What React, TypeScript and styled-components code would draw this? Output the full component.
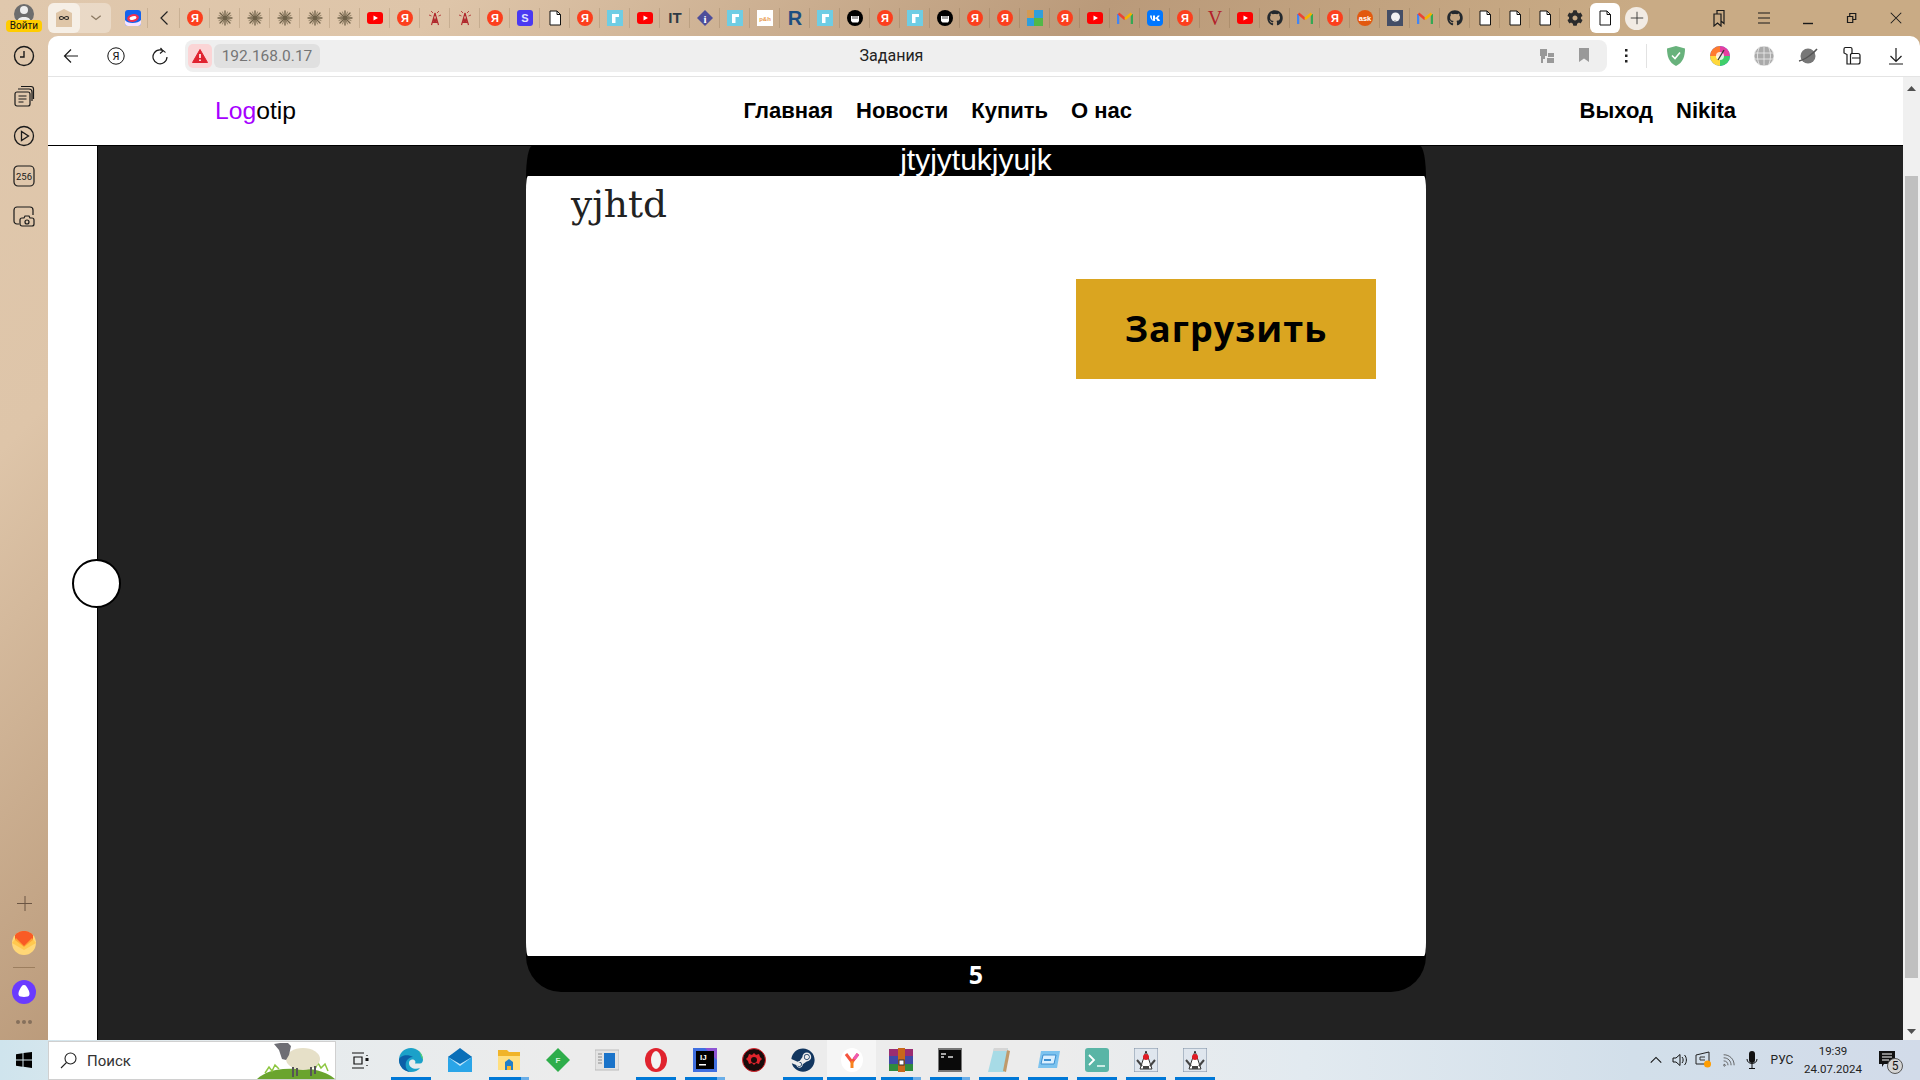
import React from "react";
import styled, { createGlobalStyle } from "styled-components";
import { FaGithub, FaCog, FaSteam } from "react-icons/fa";

const Global = createGlobalStyle`
  html, body { margin: 0; padding: 0; width: 1920px; height: 1080px; overflow: hidden; }
  body { font-family: "Liberation Sans", Arial, sans-serif; }
  * { box-sizing: border-box; }
`;

const Frame = styled.div`
  width: 1920px; height: 1080px; display: flex; flex-direction: column; overflow: hidden;
  background: linear-gradient(135deg, #e0c8ad 0%, #dec5a9 15%, #ba9a7a 37%, #c9ab85 55%, #c9ab85 100%);
`;
const TabStrip = styled.div`height: 36px; display: flex; align-items: center; flex: none;`;
const Profile = styled.div`
  width: 48px; height: 36px; flex: none; display: flex; flex-direction: column; align-items: center; position: relative;
`;
const AvatarDisc = styled.div`
  width: 20px; height: 20px; margin-top: 4px; border-radius: 50%; background: #6d6d6d; overflow: hidden;
  display: flex; justify-content: center;
`;
const LoginBadge = styled.span`
  position: absolute; top: 20px; left: 6px; width: 36px; height: 12px; border-radius: 4px; background: #fc0;
  font: 10px/12px "Roboto", sans-serif; text-align: center; color: #111;
`;
const TabGroup = styled.div`
  width: 63px; height: 30px; display: flex; border-radius: 6px; background: rgba(255,255,255,.32); margin-right: 7px; flex: none;
`;
const GroupHome = styled.div`
  width: 32px; height: 30px; border-radius: 6px; background: #f6efe6; display: flex; align-items: center; justify-content: center;
`;
const GroupArrow = styled.div`flex: 1; display: flex; align-items: center; justify-content: center;`;
const FavSlot = styled.div<{ $first?: boolean }>`
  width: 30px; height: 20px; flex: none; display: flex; align-items: center; justify-content: center;
  border-right: 1px solid rgba(90,60,30,.16);
  margin-right: ${p => (p.$first ? "2px" : "0")};
  padding-left: 1px;
  svg { width: 16px; height: 16px; display: block; }
`;
const ActiveTab = styled.div`
  width: 30px; height: 30px; flex: none; border-radius: 6px; background: #fff; display: flex; align-items: center; justify-content: center;
`;
const NewTab = styled.div`
  width: 23px; height: 23px; border-radius: 50%; background: #f2ebe3; margin-left: 5px; flex: none;
  display: flex; align-items: center; justify-content: center;
`;
const WindowControls = styled.div`display: flex; margin-left: auto; padding-right: 2px;`;
const IconSlot = styled.div`
  width: 44px; height: 32px; flex: none; display: flex; align-items: center; justify-content: center;
`;
const Middle = styled.div`flex: 1; display: flex; min-height: 0;`;
const Sidebar = styled.div`
  width: 48px; flex: none; display: flex; flex-direction: column; justify-content: space-between; padding-bottom: 8px;
`;
const SideGroup = styled.div`display: flex; flex-direction: column; align-items: center;`;
const SideSlot = styled.div`height: 40px; width: 48px; display: flex; align-items: center; justify-content: center;`;
const SideRule = styled.div`width: 22px; height: 1px; background: rgba(90,60,30,.35); margin: 4px 0;`;
const DotsSlot = styled.div`height: 20px; display: flex; gap: 2px; align-items: center;`;
const Dot = styled.span`width: 4px; height: 4px; border-radius: 50%; background: #85705c;`;
const Browser = styled.div`flex: 1; display: flex; flex-direction: column; min-width: 0;`;
const Toolbar = styled.div`
  height: 41px; flex: none; background: #fff; border-radius: 10px 10px 0 0; border-bottom: 1px solid #e4e4e4;
  display: flex; align-items: center; padding: 0 2px 1px;
`;
const AddressBar = styled.div`
  flex: 1; height: 32px; margin-left: 3px; border-radius: 8px; background: #efefef;
  display: flex; align-items: center; padding: 0 5px 0 3px; min-width: 0;
`;
const WarnPill = styled.div`
  width: 24px; height: 24px; border-radius: 5px; background: #fbd5d6; display: flex; align-items: center; justify-content: center; flex: none;
`;
const HostPill = styled.div`
  width: 106px; height: 24px; margin-left: 2px; border-radius: 6px; background: #e0e0e0; color: #757575; flex: none;
  font: 15.500px/24px "Roboto", sans-serif; text-align: center;
`;
const PageTitle = styled.div`
  flex: 1; text-align: center; font: 16px/33px "Roboto", sans-serif; color: #222; padding-right: 65px;
`;
const AddrIcon = styled.div`width: 37px; display: flex; justify-content: center; flex: none;`;
const KebabSlot = styled.div`
  width: 40px; height: 24px; flex: none; display: flex; align-items: center; justify-content: center;
  border-right: 1px solid #e2e2e2;
`;
const ExtGap = styled.div`width: 7px; flex: none;`;
const PageRow = styled.div`flex: 1; display: flex; min-height: 0;`;
const PageMain = styled.div`flex: 1; display: flex; flex-direction: column; min-width: 0;`;
const Nav = styled.nav`
  height: 69px; flex: none; background: #fff; border-bottom: 1px solid #000; padding: 0 167px;
  display: flex; align-items: center; justify-content: space-between;
`;
const Logo = styled.div`font-size: 24.700px; color: #000; line-height: 1;`;
const LogoAccent = styled.span`color: #a600ff;`;
const NavGroup = styled.div`display: flex; gap: 23px;`;
const NavLink = styled.a`font-size: 22px; font-weight: 700; color: #000; line-height: 1;`;
const Workspace = styled.div`flex: 1; display: flex; min-height: 0;`;
const Strip = styled.div`width: 50px; flex: none; background: #fff; border-right: 1px solid #000; position: relative;`;
const Knob = styled.div`
  position: absolute; left: 24px; top: 413px; width: 49px; height: 49px; border-radius: 50%; background: #fff; border: 2px solid #000;
`;
const Dark = styled.div`flex: 1; background: #222; padding: 0 0 48px 428px; display: flex;`;
const Card = styled.section`width: 900px; display: flex; flex-direction: column; background: #000; border-radius: 6px 6px 35px 35px / 32px 32px 36px 36px;`;
const CardHead = styled.header`
  height: 30px; flex: none; color: #fff; font-size: 30px; line-height: 28px; text-align: center;
`;
const CardBody = styled.div`
  flex: 1; background: #fff; border-radius: 2px / 14px; padding: 0 50px 0 45px; display: flex; flex-direction: column;
`;
const CardTitle = styled.div`font: 37.500px/44px "DejaVu Serif", serif; color: #222; margin-top: 6px;`;
const Upload = styled.button`
  align-self: flex-end; width: 300px; height: 100px; margin-top: 53px; background: #daa520; border: 0; color: #000;
  font: 700 36px/100px "Open Sans", sans-serif; letter-spacing: 1px; padding: 0;
`;
const CardFoot = styled.footer`
  height: 36px; flex: none; color: #fff; text-align: center; font: 700 25px/36px "Open Sans", sans-serif;
`;
const Scrollbar = styled.div`
  width: 17px; flex: none; background: #f0f0f0; display: flex; flex-direction: column; align-items: center;
  padding: 4px 0 2px;
`;
const ScrollArrow = styled.div`height: 14px; display: flex; align-items: center; justify-content: center;`;
const ScrollThumb = styled.div`width: 13px; height: 802px; margin: 81px 0 auto; background: #c0c0c0;`;
const Taskbar = styled.div`
  height: 40px; flex: none; display: flex; align-items: stretch;
  background: linear-gradient(90deg, #cfe4ed 0, #e4ebee 10%, #ececec 30%, #ececec 55%, #e2eaf0 68%, #d2dfea 85%, #d2dbe9 100%);
`;
const StartBtn = styled.div`width: 48px; flex: none; display: flex; align-items: center; justify-content: center;`;
const SearchBox = styled.div`
  width: 288px; flex: none; margin-top: 1px; background: #fff; border: 1px solid #d0d0d0;
  display: flex; align-items: center; padding-left: 11px; position: relative; overflow: hidden;
`;
const SearchText = styled.span`font: 15px "Roboto", sans-serif; color: #333; margin-left: 10px;`;
const Sheep = styled.div`position: absolute; right: 0; bottom: 0; line-height: 0;`;
const TaskView = styled.div`width: 48px; flex: none; display: flex; align-items: center; justify-content: center;`;
const Apps = styled.div`display: flex; margin-left: 2px;`;
type AppState = "off" | "on" | "stack" | "active";
const App49 = styled.div<{ $state: AppState }>`
  width: 49px; flex: none; display: flex; align-items: center; justify-content: center;
  svg { width: 24px; height: 24px; display: block; }
  background-repeat: no-repeat;
  ${p => p.$state === "on" && "background-image: linear-gradient(#0078d7,#0078d7); background-size: 40px 3px; background-position: center bottom;"}
  ${p => p.$state === "stack" && "background-image: linear-gradient(90deg,#0078d7 0,#0078d7 32px,#6aaee8 32px,#6aaee8 40px); background-size: 40px 3px; background-position: center bottom;"}
  ${p => p.$state === "active" && "background-color: #f5f5f5; background-image: linear-gradient(#0078d7,#0078d7); background-size: 100% 3px; background-position: center bottom;"}
`;
const Tray = styled.div`margin-left: auto; display: flex; align-items: center; padding-right: 12px;`;
const TraySlot = styled.div`width: 24px; display: flex; align-items: center; justify-content: center;`;
const Lang = styled.div`width: 36px; text-align: center; font: 12px "Roboto", sans-serif; color: #222;`;
const Clock = styled.div`width: 66px; text-align: center; font: 11.500px/18px "Roboto", sans-serif; color: #222;`;
const Notify = styled.div`width: 42px; height: 40px; display: flex; align-items: center; justify-content: center; position: relative;`;
const NotifyBadge = styled.span`
  position: absolute; left: 21px; top: 18px; width: 16px; height: 16px; border-radius: 50%; background: #d4d4d4; border: 1px solid #555;
  font: 12px/14px "Roboto", sans-serif; text-align: center; color: #111;
`;

const Ya = () => (
  <svg viewBox="0 0 16 16"><circle cx="8" cy="8" r="8" fill="#fc3f1d" /><text x="8" y="12" textAnchor="middle" fontSize="11" fontWeight="700" fontFamily="Liberation Sans" fill="#fff">Я</text></svg>
);
const Star = () => (
  <svg viewBox="0 0 16 16" stroke="#6f6149" strokeWidth="1.300" strokeLinecap="round">
    <path d="M8 1v14M1 8h14M3 3l10 10M13 3L3 13" /><path d="M5.500 2l5 12M10.500 2l-5 12M2 5.500l12 5M14 5.500l-12 5" strokeWidth=".7" />
  </svg>
);
const Yt = () => (
  <svg viewBox="0 0 16 16"><rect y="2" width="16" height="12" rx="3" fill="#f00" /><path d="M6.500 5.500v5L11 8z" fill="#fff" /></svg>
);
const Tower = () => (
  <svg viewBox="0 0 16 16" fill="none" stroke="#b0282c" strokeWidth="1.100">
    <path d="M8 3L4.500 15M8 3l3.500 12M6.500 9h3M5.500 12.500h5M6 9l4 3.500M10 9l-4 3.500" /><path d="M4 1l2 2M12 1l-2 2M2 5l2.500 1M14 5l-2.500 1" strokeWidth=".8" />
  </svg>
);
const SquareS = () => (
  <svg viewBox="0 0 16 16"><rect width="16" height="16" rx="3" fill="#4a38f2" /><text x="8" y="12" textAnchor="middle" fontSize="11" fontWeight="700" fontFamily="Liberation Sans" fill="#dfe0ff">S</text></svg>
);
const Doc = () => (
  <svg viewBox="0 0 16 16" style={{ width: 16, height: 16 }} fill="#fff" stroke="#111" strokeWidth="1"><path d="M3 1h7l3.500 3.500V15H3z" /><path d="M10 1v3.500h3.500" fill="none" /></svg>
);
const RTile = () => (
  <svg viewBox="0 0 16 16"><rect width="16" height="16" fill="#6ecde4" /><path d="M5 4h7v3H8.500v6H5z" fill="#fff" /></svg>
);
const IT = () => (
  <svg viewBox="0 0 16 16" overflow="visible"><text x="8" y="13" textAnchor="middle" fontSize="15" fontWeight="700" fontFamily="Liberation Sans" fill="#2f3a45">IT</text></svg>
);
const Info = () => (
  <svg viewBox="0 0 16 16"><path d="M8 0l8 8-8 8-8-8z" fill="#4d4d9a" /><text x="8" y="12.500" textAnchor="middle" fontSize="11" fontWeight="700" fontFamily="Liberation Serif" fill="#fff">i</text></svg>
);
const PH = () => (
  <svg viewBox="0 0 16 16"><rect width="16" height="16" fill="#fff" /><text x="8" y="10.500" textAnchor="middle" fontSize="6" fontWeight="700" fontFamily="Liberation Sans" fill="#e89a4c">p&amp;h</text></svg>
);
const BigR = () => (
  <svg viewBox="0 0 16 16" overflow="visible"><text x="8" y="14.500" textAnchor="middle" fontSize="20" fontWeight="700" fontFamily="Liberation Sans" fill="#1d4e80">R</text></svg>
);
const Fist = () => (
  <svg viewBox="0 0 16 16"><circle cx="8" cy="8" r="8" fill="#000" /><path d="M4 6h8v5l-1 1.500H5.500L4 11z" fill="#fff" /><path d="M6 6v3M8 6v3M10 6v3" stroke="#000" strokeWidth=".7" /></svg>
);
const Tiles = () => (
  <svg viewBox="0 0 16 16"><rect width="7" height="8" fill="#d39a54" /><rect x="7" width="9" height="8" fill="#2f9fdc" /><rect y="8" width="7" height="8" fill="#2f9fdc" /><rect x="7" y="8" width="9" height="8" fill="#52b848" /></svg>
);
const Gmail = () => (
  <svg viewBox="0 0 16 16" fill="none"><path d="M1 14V4" stroke="#4285f4" strokeWidth="2.500" /><path d="M15 14V4" stroke="#34a853" strokeWidth="2.500" /><path d="M1.500 3.500L8 9" stroke="#ea4335" strokeWidth="2.500" /><path d="M14.500 3.500L8 9" stroke="#f4b400" strokeWidth="2.500" /></svg>
);
const Vk = () => (
  <svg viewBox="0 0 16 16"><rect width="16" height="16" rx="4" fill="#0077ff" /><path d="M3 5.500c.2 3.500 2 5.500 5 5.500V8.500c1 .1 2 1.100 2.500 2.500H13c-.5-1.700-1.500-2.600-2.300-3 .8-.4 1.700-1.400 2-2.500h-2c-.3 1-1.500 2.300-2.700 2.400V5.500H6v4.400C5 9.600 4.800 7.500 4.800 5.500z" fill="#fff" /></svg>
);
const BigV = () => (
  <svg viewBox="0 0 16 16" overflow="visible"><text x="8" y="14.500" textAnchor="middle" fontSize="20" fontFamily="Liberation Serif" fill="#b3202a">V</text></svg>
);
const Ask = () => (
  <svg viewBox="0 0 16 16"><circle cx="8" cy="8" r="8" fill="#e2590f" /><text x="8" y="10.800" textAnchor="middle" fontSize="7.500" fontWeight="700" fontFamily="Liberation Sans" fill="#fff">ask</text></svg>
);
const DarkSq = () => (
  <svg viewBox="0 0 16 16"><rect width="16" height="16" fill="#444e66" /><circle cx="8.500" cy="7" r="4.500" fill="#f2f2f2" /><circle cx="8" cy="11" r="1" fill="#aaa" /></svg>
);
const OperaBox = () => (
  <svg viewBox="0 0 16 16"><rect width="16" height="16" rx="3" fill="#1463ee" /><path d="M0 10c2 4 13 4 16 0v3a3 3 0 01-3 3H3a3 3 0 01-3-3z" fill="#f5e3ff" /><ellipse cx="8" cy="8" rx="6" ry="3.800" fill="#f0304f" transform="rotate(-12 8 8)" /><ellipse cx="8" cy="8" rx="3.500" ry="1.800" fill="#fff" transform="rotate(-12 8 8)" /></svg>
);
const Chev = () => (
  <svg viewBox="0 0 16 16" fill="none" stroke="#222" strokeWidth="1.200"><path d="M10.500 1.500L4 8l6.500 6.500" /></svg>
);

const favs: React.ReactNode[] = [
  <OperaBox />, <Chev />, <Ya />, <Star />, <Star />, <Star />, <Star />, <Star />, <Yt />, <Ya />, <Tower />, <Tower />, <Ya />, <SquareS />, <Doc />, <Ya />, <RTile />, <Yt />, <IT />, <Info />, <RTile />, <PH />, <BigR />, <RTile />, <Fist />, <Ya />, <RTile />, <Fist />, <Ya />, <Ya />, <Tiles />, <Ya />, <Yt />, <Gmail />, <Vk />, <Ya />, <BigV />, <Yt />, <FaGithub color="#24292e" />, <Gmail />, <Ya />, <Ask />, <DarkSq />, <Gmail />, <FaGithub color="#24292e" />, <Doc />, <Doc />, <Doc />, <FaCog color="#2b2b2b" />,
];

const Line = ({ d, w = 18, sw = 1.2, c = "#1a1a1a", vb = 18 }: { d: string; w?: number; sw?: number; c?: string; vb?: number }) => (
  <svg width={w} height={w} viewBox={`0 0 ${vb} ${vb}`} fill="none" stroke={c} strokeWidth={sw}><path d={d} /></svg>
);

const Jdk = () => (
  <svg viewBox="0 0 24 24"><rect width="24" height="24" rx="1" fill="#dfe6ee" stroke="#7b8ba0" /><path d="M12 3L6 21h12z" fill="#fff" stroke="#333" /><path d="M3 12l5 6M21 12l-5 6" stroke="#444" strokeWidth="2" /><circle cx="12" cy="9" r="3" fill="#e01b24" /><path d="M9 18h6v3H9z" fill="#444" /></svg>
);

const apps: { s: AppState; n: React.ReactNode }[] = [
  { s: "on", n: (
    <svg viewBox="0 0 24 24"><path d="M12 0C5 0 0 5 0 12c0 7 6 12 12 12 4 0 7-1.500 9-4-5 2-11 0-11-5 0-2 1-3 3-3.500 3 0 4 2 3 4h5c2 0 3-2 3-4C24 5 18 0 12 0z" fill="#1ba1c9" /><path d="M24 12c0-6-5-12-12-12 6 0 9 3 10 8 .5 2 2 3 2 4z" fill="#5dd868" /><path d="M0 12c0 7 6 12 12 12-5-1-6-6-5-10 1-3 4-5 7-5-5-3-13-2-14 3z" fill="#0c5fa8" /></svg>
  ) },
  { s: "off", n: (
    <svg viewBox="0 0 24 24"><path d="M0 9l12-9 12 9v15H0z" fill="#0a6fb8" /><path d="M0 9h24v15H0z" fill="#2aa5e8" /><path d="M0 9l12 9 12-9H0z" fill="#bfe6fb" /><path d="M0 9l12 7 12-7-12-7z" fill="#0a6fb8" /></svg>
  ) },
  { s: "stack", n: (
    <svg viewBox="0 0 24 24"><path d="M1 2h9l2 2h11v18H1z" fill="#f0b429" /><path d="M1 8h22v14H1z" fill="#ffdf80" /><path d="M8 14l4-3 4 3v8H8z" fill="#1f7fc9" /><rect x="10" y="18" width="4" height="4" fill="#f2b32d" /></svg>
  ) },
  { s: "off", n: (
    <svg viewBox="0 0 24 24"><path d="M12 0l12 12-12 12L0 12z" fill="#2ead4b" /><text x="12" y="15" textAnchor="middle" fontSize="8" fontWeight="700" fontFamily="Liberation Sans" fill="#d6f6dd">F</text></svg>
  ) },
  { s: "off", n: (
    <svg viewBox="0 0 24 24"><rect y="2" width="24" height="20" fill="#e3e3e3" stroke="#bbb" /><rect x="9" y="5" width="11" height="15" fill="#1a73c9" /><path d="M3 6h4M3 9h4M3 12h4M3 15h4" stroke="#8a8a8a" /></svg>
  ) },
  { s: "on", n: (
    <svg viewBox="0 0 24 24"><ellipse cx="12" cy="12" rx="11" ry="12" fill="#e0232e" /><ellipse cx="12" cy="12" rx="5" ry="9" fill="#f2f2f2" /></svg>
  ) },
  { s: "stack", n: (
    <svg viewBox="0 0 24 24"><rect width="24" height="24" fill="#3f6fe0" /><path d="M0 0h24v12L12 0z" fill="#a34ed0" opacity=".8" /><rect x="3" y="3" width="18" height="18" fill="#000" /><text x="7" y="12" fontSize="8" fontWeight="700" fontFamily="Liberation Sans" fill="#fff">IJ</text><rect x="6" y="16" width="7" height="1.500" fill="#fff" /></svg>
  ) },
  { s: "off", n: (
    <svg viewBox="0 0 24 24"><circle cx="12" cy="12" r="11.500" fill="#1a0b0b" stroke="#e0242c" /><path d="M12 5l2 2 3-1 1 3 2 2-2 2-1 3-3-1-2 2-2-2-3 1-1-3-2-2 2-2 1-3 3 1z" fill="#e0242c" /><circle cx="12" cy="12" r="3" fill="#1a0b0b" /></svg>
  ) },
  { s: "on", n: <FaSteam color="#12365f" /> },
  { s: "active", n: (
    <svg viewBox="0 0 24 24"><ellipse cx="12" cy="12" rx="11" ry="12" fill="#fff" /><path d="M6 6l6 8 6-8" fill="none" stroke="#f5533d" strokeWidth="3" /><path d="M14 11l4-5" stroke="#ee5bb4" strokeWidth="3" /><path d="M12 13v7" stroke="#f7831e" strokeWidth="3" /></svg>
  ) },
  { s: "stack", n: (
    <svg viewBox="0 0 24 24"><rect y="1" width="24" height="7" fill="#9b2d71" /><rect y="8" width="24" height="8" fill="#3f4aa8" /><rect y="16" width="24" height="7" fill="#2f8b3e" /><rect x="9" y="0" width="7" height="24" fill="#c8681a" /><rect x="10" y="12" width="5" height="5" fill="#fff" stroke="#333" /></svg>
  ) },
  { s: "stack", n: (
    <svg viewBox="0 0 24 24"><rect width="24" height="24" fill="#777" /><rect x="1" y="2" width="22" height="20" fill="#0a0a0a" /><path d="M3 6h5M3 9h3M10 9h5" stroke="#ddd" strokeWidth="1.500" /></svg>
  ) },
  { s: "on", n: (
    <svg viewBox="0 0 24 24"><path d="M7 0h14L17 24H1z" fill="#a7dbe6" /><path d="M20 2l3 1-4 21-3-1z" fill="#c09a6a" /><path d="M7 0h14l-1 3H6z" fill="#d5d5d5" /></svg>
  ) },
  { s: "on", n: (
    <svg viewBox="0 0 24 24"><path d="M5 3h19l-3 17H2z" fill="#7cc3ef" /><path d="M7 7h13l-2 9H5z" fill="#d9efff" stroke="#3c8fd0" /><path d="M8 12h7" stroke="#3c8fd0" strokeWidth="2" /></svg>
  ) },
  { s: "on", n: (
    <svg viewBox="0 0 24 24"><rect width="24" height="24" rx="3" fill="#5ab5a6" /><path d="M4 7l5 5-5 5" fill="none" stroke="#fff" strokeWidth="1.800" /><path d="M12 18h8" stroke="#d7f0ea" strokeWidth="1.800" /></svg>
  ) },
  { s: "on", n: <Jdk /> },
  { s: "on", n: <Jdk /> },
];

export default function App() {
  return (
    <Frame>
      <Global />
      <TabStrip>
        <Profile>
          <AvatarDisc>
            <svg width="14" height="20" viewBox="0 0 14 20"><circle cx="7" cy="6" r="4" fill="#eee" /><path d="M0 20c0-6 3-7 7-7s7 1 7 7z" fill="#eee" /></svg>
          </AvatarDisc>
          <LoginBadge>Войти</LoginBadge>
        </Profile>
        <TabGroup>
          <GroupHome>
            <svg width="16" height="18" viewBox="0 0 16 18"><path d="M8 0l8 4v14H0V4z" fill="#dfc6a8" /><path d="M8 9c-1.500-2-4.500-2-4.500 0s3 2 4.500 0c1.500-2 4.500-2 4.500 0s-3 2-4.500 0z" fill="none" stroke="#222" strokeWidth="1.100" /></svg>
          </GroupHome>
          <GroupArrow><Line d="M3 6l6 5 6-5" w={14} c="#8a7860" sw={1.600} /></GroupArrow>
        </TabGroup>
        {favs.map((f, i) => <FavSlot key={i} $first={i === 0}>{f}</FavSlot>)}
        <ActiveTab><Doc /></ActiveTab>
        <NewTab><Line d="M9 2v14M2 9h14" w={16} c="#333" sw={1} /></NewTab>
        <WindowControls>
          <IconSlot><Line d="M6 5V1.500h7v13l-3-2.500M3 5h7v12l-3.500-3L3 17z" w={18} /></IconSlot>
          <IconSlot><Line d="M3 4h12M3 9h12M3 14h12" w={18} /></IconSlot>
          <IconSlot><Line d="M3 13.500h10" w={16} vb={16} sw={1.400} /></IconSlot>
          <IconSlot><Line d="M2 6h7v8H2zM5 6V2h8v8H9" w={12} vb={16} sw={1.600} /></IconSlot>
          <IconSlot><Line d="M2 2l12 12M14 2L2 14" w={14} vb={16} /></IconSlot>
        </WindowControls>
      </TabStrip>
      <Middle>
        <Sidebar>
          <SideGroup>
            <SideSlot><Line d="M11 1.500a9.500 9.500 0 100 19 9.500 9.500 0 000-19zM11 6v6H7" w={22} vb={22} sw={1.400} /></SideSlot>
            <SideSlot><Line d="M2 9a2 2 0 012-2h11a2 2 0 012 2v10a2 2 0 01-2 2H4a2 2 0 01-2-2zM5 4h11a3 3 0 013 3v9M8 1.500h10a2.500 2.500 0 012.500 2.500v10M5.500 11h8M5.500 14h8M5.500 17h5" w={22} vb={22} /></SideSlot>
            <SideSlot><Line d="M11 1.500a9.500 9.500 0 100 19 9.500 9.500 0 000-19zM8.500 6.500v9l7-4.500z" w={22} vb={22} sw={1.300} /></SideSlot>
            <SideSlot>
              <svg width="22" height="22" viewBox="0 0 22 22"><rect x="1" y="1" width="20" height="20" rx="4" fill="none" stroke="#1a1a1a" strokeWidth="1.200" /><text x="11" y="14.500" textAnchor="middle" fontSize="9.500" fontFamily="Roboto" fill="#1a1a1a">256</text></svg>
            </SideSlot>
            <SideSlot><Line d="M6 19H4a3 3 0 01-3-3V5a3 3 0 013-3h13a3 3 0 013 3v5M9 13h2l1-2h4l1 2h2a2 2 0 012 2v4a2 2 0 01-2 2H9a2 2 0 01-2-2v-4a2 2 0 012-2zM14 15a2 2 0 100 4 2 2 0 000-4z" w={22} vb={22} /></SideSlot>
          </SideGroup>
          <SideGroup>
            <SideSlot><Line d="M8 0v15M0 7.500h15" w={15} vb={15} c="#6b5543" sw={1} /></SideSlot>
            <SideSlot>
              <svg width="24" height="24" viewBox="0 0 24 24"><circle cx="12" cy="12" r="12" fill="#ffd777" /><path d="M3 4a12 12 0 0118 0v5l-9 7-9-7z" fill="#f95b25" /><path d="M0 12l4-5 8 8 8-8 4 5-12 7z" fill="#ffc23f" opacity=".7" /></svg>
            </SideSlot>
            <SideRule />
            <SideSlot>
              <svg width="24" height="24" viewBox="0 0 24 24"><circle cx="12" cy="12" r="12" fill="#6a3bff" /><path d="M12 5c2 0 3 2 4.500 5 1.500 3 1.500 6-1 6.500-2 .5-5 .5-7 0C6 16 6 13 7.500 10 9 7 10 5 12 5z" fill="#fff" /></svg>
            </SideSlot>
            <DotsSlot><Dot /><Dot /><Dot /></DotsSlot>
          </SideGroup>
        </Sidebar>
        <Browser>
          <Toolbar>
            <IconSlot><Line d="M15 9H1.500M8 2.500L1.500 9 8 15.500" w={18} /></IconSlot>
            <IconSlot>
              <svg width="18" height="18" viewBox="0 0 18 18"><circle cx="9" cy="9" r="8.200" fill="none" stroke="#111" strokeWidth="1" /><text x="9" y="13" textAnchor="middle" fontSize="11" fontFamily="Roboto" fill="#111">Я</text></svg>
            </IconSlot>
            <IconSlot><Line d="M14.500 5.500A7 7 0 1016 10M9.500 1l2.500 3-3 2.500" w={18} /></IconSlot>
            <AddressBar>
              <WarnPill>
                <svg width="16" height="14" viewBox="0 0 16 14"><path d="M8 .500l7.500 13H.5z" fill="#e02330" stroke="#e02330" strokeLinejoin="round" /><path d="M8 5v4M8 10.500v1.500" stroke="#fff" strokeWidth="1.600" /></svg>
              </WarnPill>
              <HostPill>192.168.0.17</HostPill>
              <PageTitle>Задания</PageTitle>
              <AddrIcon>
                <svg width="14" height="14" viewBox="0 0 14 14" fill="#999"><path d="M0 0h7v7H5v3H3v4H1V7H0z" /><rect x="8" y="4" width="6" height="4" /><rect x="7" y="9" width="7" height="5" /></svg>
              </AddrIcon>
              <AddrIcon>
                <svg width="12" height="16" viewBox="0 0 12 16" fill="#999"><path d="M1 0h10v14l-5-3.500L1 14z" /></svg>
              </AddrIcon>
            </AddressBar>
            <KebabSlot>
              <svg width="3" height="14" viewBox="0 0 3 14" fill="#222"><rect y="0" width="2.500" height="2.500" /><rect y="5.500" width="2.500" height="2.500" /><rect y="11" width="2.500" height="2.500" /></svg>
            </KebabSlot>
            <ExtGap />
            <IconSlot>
              <svg width="20" height="20" viewBox="0 0 20 20"><path d="M10 0l9 2.500c0 8-2 14-9 17.500C3 16.500 1 10.500 1 2.500z" fill="#68b27c" /><path d="M6 9.500l3 3 5-6" fill="none" stroke="#fff" strokeWidth="1.600" /></svg>
            </IconSlot>
            <IconSlot>
              <svg width="20" height="20" viewBox="0 0 20 20"><circle cx="10" cy="10" r="10" fill="#3a7ff0" /><path d="M10 10L10 0A10 10 0 0120 10z" fill="#e63ea0" /><path d="M10 10L20 10A10 10 0 0110 20z" fill="#3fcf6a" /><path d="M10 10L10 20A10 10 0 010 10z" fill="#ffd83b" /><path d="M10 10L0 10A10 10 0 0110 0z" fill="#ff7a2f" /><circle cx="10" cy="10" r="4" fill="#fff" opacity=".8" /><path d="M14 4l-6 10" stroke="#333" strokeWidth="1.300" /></svg>
            </IconSlot>
            <IconSlot>
              <svg width="20" height="20" viewBox="0 0 20 20" fill="#aaa" stroke="#eee" strokeWidth=".8"><circle cx="10" cy="10" r="10" /><path d="M0 7h20M0 13h20M10 0v20M5 2c-2 5-2 11 0 16M15 2c2 5 2 11 0 16" fill="none" /></svg>
            </IconSlot>
            <IconSlot>
              <svg width="20" height="20" viewBox="0 0 20 20"><circle cx="10" cy="10" r="7.500" fill="#777" /><path d="M1 15C6 14 15 8 19 3" stroke="#555" strokeWidth="1.500" fill="none" /></svg>
            </IconSlot>
            <IconSlot><Line d="M2 3a1.500 1.500 0 011.500-1.500h5A1.500 1.500 0 0110 3v4l-1.500 1.500V18H5V8.500L2 7zM10 7.500h6a2 2 0 012 2V16a2 2 0 01-2 2H8.500M10 12h8" w={20} vb={20} /></IconSlot>
            <IconSlot><Line d="M9 1v13M3.500 9L9 14.500 14.500 9M2 17h14" w={18} /></IconSlot>
          </Toolbar>
          <PageRow>
            <PageMain>
              <Nav>
                <Logo><LogoAccent>Log</LogoAccent>otip</Logo>
                <NavGroup>
                  <NavLink>Главная</NavLink>
                  <NavLink>Новости</NavLink>
                  <NavLink>Купить</NavLink>
                  <NavLink>О нас</NavLink>
                </NavGroup>
                <NavGroup>
                  <NavLink>Выход</NavLink>
                  <NavLink>Nikita</NavLink>
                </NavGroup>
              </Nav>
              <Workspace>
                <Strip><Knob /></Strip>
                <Dark>
                  <Card>
                    <CardHead>jtyjytukjyujk</CardHead>
                    <CardBody>
                      <CardTitle>yjhtd</CardTitle>
                      <Upload>Загрузить</Upload>
                    </CardBody>
                    <CardFoot>5</CardFoot>
                  </Card>
                </Dark>
              </Workspace>
            </PageMain>
            <Scrollbar>
              <ScrollArrow><svg width="9" height="5" viewBox="0 0 9 5" fill="#505050"><path d="M4.500 0L9 5H0z" /></svg></ScrollArrow>
              <ScrollThumb />
              <ScrollArrow><svg width="9" height="5" viewBox="0 0 9 5" fill="#505050"><path d="M4.500 5L9 0H0z" /></svg></ScrollArrow>
            </Scrollbar>
          </PageRow>
        </Browser>
      </Middle>
      <Taskbar>
        <StartBtn>
          <svg width="16" height="16" viewBox="0 0 16 16" fill="#000"><path d="M0 2.200L6.500 1.300V7.500H0zM7.500 1.100L16 0v7.500H7.500zM0 8.500h6.500v6.200L0 13.800zM7.500 8.500H16V16l-8.500-1.200z" /></svg>
        </StartBtn>
        <SearchBox>
          <svg width="17" height="17" viewBox="0 0 17 17" fill="none" stroke="#222" strokeWidth="1.100"><circle cx="10.500" cy="6.500" r="5.500" /><path d="M6.500 10.500L1 16" /></svg>
          <SearchText>Поиск</SearchText>
          <Sheep>
            <svg width="78" height="38" viewBox="0 0 78 38">
              <path d="M0 38c8-7 16-9 26-10 18-1 38-2 52 10z" fill="#6aa42e" />
              <path d="M8 32l4-6 3 4 3-6 4 4M58 28l3-6 3 5 4-4 3 7" stroke="#8cc63f" strokeWidth="1.500" fill="none" />
              <ellipse cx="46" cy="18" rx="17" ry="11" fill="#e6e0c8" />
              <path d="M36 26v10M40 27v8M54 26v9M58 25v8" stroke="#555" strokeWidth="2" />
              <path d="M17 3l6-1 8 0 3 3-2 9-3 5-4-1-3-9z" fill="#6e6e74" />
            </svg>
          </Sheep>
        </SearchBox>
        <TaskView>
          <svg width="18" height="17" viewBox="0 0 18 17" fill="none" stroke="#111" strokeWidth="1.200"><path d="M1 1h12M1 16h12M3 5h8v7H3zM16 13v1M16 3v1" /><rect x="14.500" y="6" width="3" height="3" fill="#111" stroke="none" /></svg>
        </TaskView>
        <Apps>
          {apps.map((a, i) => <App49 key={i} $state={a.s}>{a.n}</App49>)}
        </Apps>
        <Tray>
          <TraySlot><Line d="M2 11l6-6 6 6" w={14} vb={16} c="#111" /></TraySlot>
          <TraySlot><Line d="M1 6h3l4-3.500v11L4 10H1zM10 5c1.500 1.500 1.500 4.500 0 6M12.500 3c2.500 2.500 2.500 7.500 0 10" w={16} vb={16} c="#111" sw={1} /></TraySlot>
          <TraySlot>
            <svg width="18" height="18" viewBox="0 0 18 18"><path d="M1 4l13-3v12H1z" fill="none" stroke="#222" /><path d="M5 6h5M5 9h5M5 6v3" stroke="#333" /><circle cx="12.500" cy="13" r="3.500" fill="#ff9d00" /></svg>
          </TraySlot>
          <TraySlot><Line d="M3 14a1 1 0 100-.100M3 9c3 0 5 2 5 5M3 5.500c5 0 8.500 3.500 8.500 8.500M3 2c7 0 12 5 12 12" w={14} vb={16} c="#555" sw={1} /></TraySlot>
          <TraySlot>
            <svg width="12" height="18" viewBox="0 0 12 18"><rect x="3" y="0" width="6" height="12" rx="3" fill="#111" /><path d="M1 8c0 6 10 6 10 0M6 13v4M3 17.500h6" fill="none" stroke="#111" /></svg>
          </TraySlot>
          <Lang>РУС</Lang>
          <Clock>19:39<br />24.07.2024</Clock>
          <Notify>
            <svg width="16" height="18" viewBox="0 0 16 18"><path d="M0 0h16v13H5l-2 3v-3H0z" fill="#111" /><path d="M3 3h10M3 6h10M3 9h7" stroke="#fff" /></svg>
            <NotifyBadge>5</NotifyBadge>
          </Notify>
        </Tray>
      </Taskbar>
    </Frame>
  );
}
